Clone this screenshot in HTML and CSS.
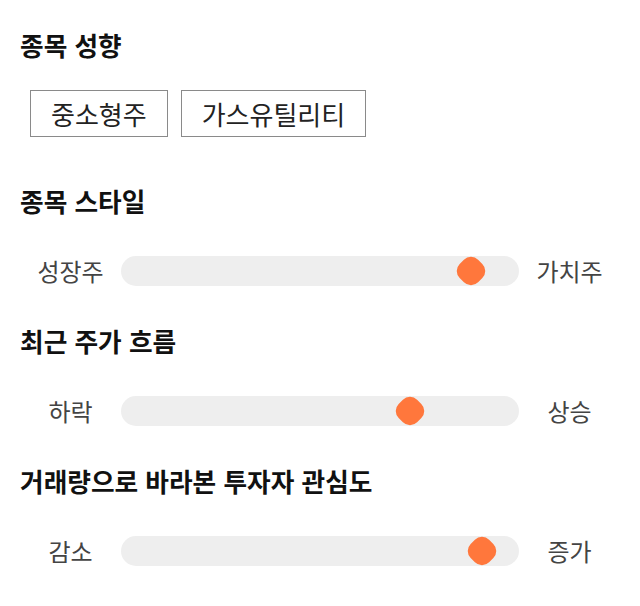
FILE: index.html
```html
<!DOCTYPE html>
<html lang="ko">
<head>
<meta charset="utf-8">
<link rel="stylesheet" href="styles.css">
</head>
<body>
<main class="page">
  <section class="section">
    <h2 class="title">종목 성향</h2>
    <div class="chips">
      <span class="chip">중소형주</span>
      <span class="chip">가스유틸리티</span>
    </div>
  </section>
  <section class="section">
    <h2 class="title">종목 스타일</h2>
    <div class="slider-row">
      <span class="end-label">성장주</span>
      <div class="track"><span class="thumb" style="left: 88%"></span></div>
      <span class="end-label">가치주</span>
    </div>
  </section>
  <section class="section">
    <h2 class="title">최근 주가 흐름</h2>
    <div class="slider-row">
      <span class="end-label">하락</span>
      <div class="track"><span class="thumb" style="left: 72.6%"></span></div>
      <span class="end-label">상승</span>
    </div>
  </section>
  <section class="section">
    <h2 class="title">거래량으로 바라본 투자자 관심도</h2>
    <div class="slider-row">
      <span class="end-label">감소</span>
      <div class="track"><span class="thumb" style="left: 90.7%"></span></div>
      <span class="end-label">증가</span>
    </div>
  </section>
</main>
</body>
</html>
```

FILE: styles.css
```css
* { box-sizing: border-box; }
html, body { margin: 0; padding: 0; background: #fff; }
body {
  font-family: "Noto Sans CJK KR", "Noto Sans", sans-serif;
  color: #111;
}
.page {
  padding: 27px 20px 0 20px;
  display: flex;
  flex-direction: column;
  gap: 32px;
}
.section { display: flex; flex-direction: column; }
.title {
  margin: 0;
  font-size: 25.7px;
  line-height: 36px;
  font-weight: 700;
  color: #111;
}
.chips {
  display: flex;
  gap: 13px;
  margin: 27px 0 14px 10px;
}
.chip {
  height: 47px;
  padding: 0 20px;
  border: 1px solid #8a8a8a;
  display: flex;
  align-items: center;
  font-size: 26px;
  color: #222;
}
.slider-row {
  margin-top: 32px;
  height: 40px;
  display: grid;
  grid-template-columns: 101px 398px 101px;
  align-items: center;
}
.end-label {
  text-align: center;
  font-size: 24px;
  line-height: 34px;
  color: #444;
}
.track {
  position: relative;
  height: 30px;
  border-radius: 15px;
  background: #eeeeee;
}
.thumb {
  position: absolute;
  top: 50%;
  width: 26px;
  height: 26px;
  margin: -13px 0 0 -13px;
  background: #ff773c;
  border-radius: 10px;
  transform: rotate(45deg);
}
```
